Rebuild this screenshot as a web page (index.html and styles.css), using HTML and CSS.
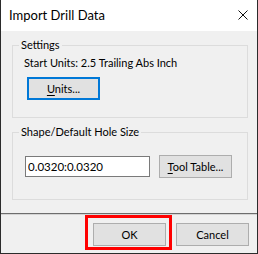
FILE: index.html
```html
<!DOCTYPE html>
<html lang="en">
<head>
  <meta charset="UTF-8">
  <title>Import Drill Data</title>
  <link rel="stylesheet" href="styles.css">
</head>
<body>
  <div class="window">
    <div class="titlebar">
      <span class="title">Import Drill Data</span>
      <svg class="close" width="10" height="10" viewBox="0 0 10 10">
        <path d="M0.5 0.5 L9.5 9.5 M9.5 0.5 L0.5 9.5" stroke="#111" stroke-width="1" fill="none"/>
      </svg>
    </div>

    <div class="content">
      <fieldset class="group settings">
        <legend>Settings</legend>
        <p class="units-label">Start Units: 2.5 Trailing Abs Inch</p>
        <button class="btn focused"><u>U</u>nits...</button>
      </fieldset>

      <fieldset class="group shape">
        <legend>Shape/Default Hole Size</legend>
        <div class="size-row">
          <input type="text" class="size-input" value="0.0320:0.0320">
          <button class="btn"><u>T</u>ool Table...</button>
        </div>
      </fieldset>
    </div>

    <div class="footer">
      <button class="btn ok">OK</button>
      <button class="btn">Cancel</button>
    </div>
  </div>
</body>
</html>
```

FILE: styles.css
```css
body {
  margin: 0;
  font-family: 'Lato', 'Liberation Sans', sans-serif;
  font-size: 11px;
  color: #000;
  background: #f0f0f0;
}

.window {
  width: 258px;
  height: 254px;
  box-sizing: border-box;
  border: 1px solid #2b2b2b;
  border-top: none;
  background: #f0f0f0;
  display: flex;
  flex-direction: column;
}

.titlebar {
  height: 31px;
  flex: none;
  background: #fff;
  display: flex;
  align-items: center;
  justify-content: space-between;
  padding: 0 9px 0 8px;
}

.title {
  font-size: 13px;
  margin-top: -1px;
}

.close {
  display: block;
  margin-top: -1px;
}

.content {
  flex: 1;
  padding: 0 9px 0 11px;
}

.group {
  margin: 6px 0 0 0;
  padding: 0 10px 0 11px;
  border: 1px solid #dcdcdc;
  min-width: 0;
}

.group legend {
  margin-left: -5px;
  padding: 0 2px;
  line-height: 16px;
}

.settings {
  padding-bottom: 17px;
}

.units-label {
  margin: 2px 0 0 0;
  line-height: 16px;
}

.btn {
  font-family: inherit;
  font-size: 11px;
  color: #000;
  width: 73px;
  height: 23px;
  box-sizing: border-box;
  background: #e1e1e1;
  border: 1px solid #adadad;
  border-radius: 0;
  padding: 0;
}

.btn u {
  text-underline-offset: 2px;
}

.focused {
  margin: 6px 0 0 3px;
  border: 2px solid #0078d7;
}

.shape {
  padding-bottom: 21px;
}

.size-row {
  display: flex;
  align-items: center;
  gap: 9px;
  margin: 15px 0 0 1px;
}

.size-input {
  width: 125px;
  height: 21px;
  box-sizing: border-box;
  border: 1px solid #7a7a7a;
  background: #fff;
  font-family: inherit;
  font-size: 11.5px;
  padding: 0 2px;
  color: #000;
}

.footer {
  height: 40px;
  flex: none;
  box-sizing: border-box;
  border-top: 1px solid #6d6d6d;
  box-shadow: inset 0 1px 0 #d4d4d4;
  display: flex;
  justify-content: flex-end;
  gap: 10px;
  padding: 9px 8px 0 0;
}

.ok {
  position: relative;
}

/* red highlight drawn over the OK button */
.ok::after {
  content: '';
  position: absolute;
  top: -9px;
  left: -9px;
  right: -7px;
  bottom: -5px;
  border: 3px solid #f00;
  pointer-events: none;
}
```
